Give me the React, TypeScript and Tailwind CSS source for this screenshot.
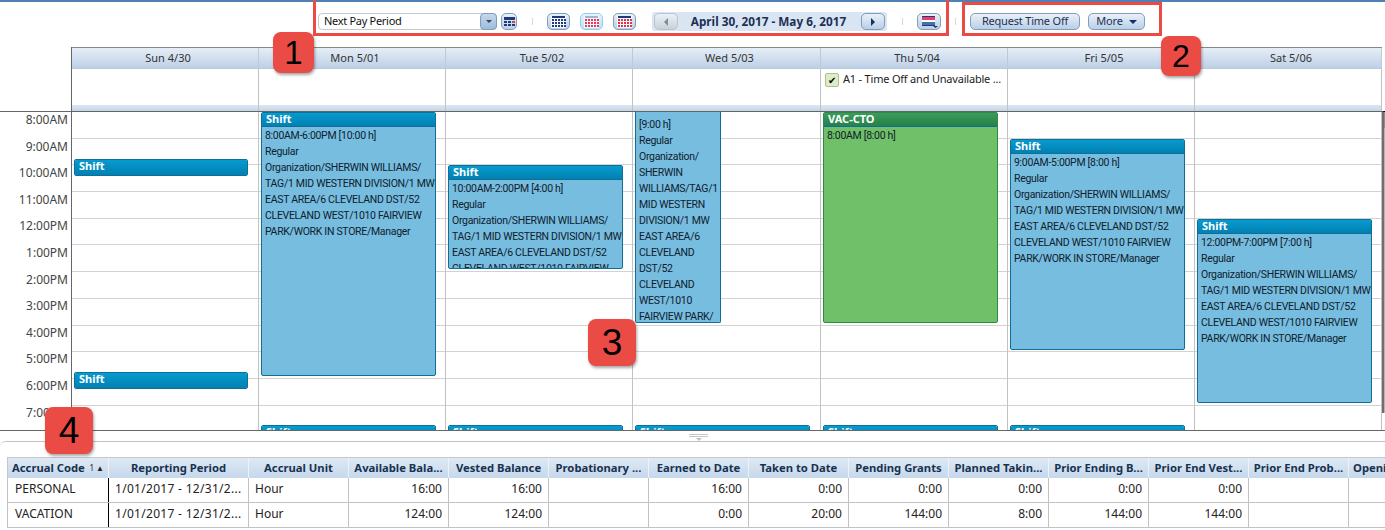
import React from "react";

const font = "font-['Noto_Sans',sans-serif]";

const days = ["Sun 4/30", "Mon 5/01", "Tue 5/02", "Wed 5/03", "Thu 5/04", "Fri 5/05", "Sat 5/06"];
const hours = ["8:00AM", "9:00AM", "10:00AM", "11:00AM", "12:00PM", "1:00PM", "2:00PM", "3:00PM", "4:00PM", "5:00PM", "6:00PM", "7:00PM"];

const orgLines = [
  "Regular",
  "Organization/SHERWIN WILLIAMS/",
  "TAG/1 MID WESTERN DIVISION/1 MW",
  "EAST AREA/6 CLEVELAND DST/52",
  "CLEVELAND WEST/1010 FAIRVIEW",
  "PARK/WORK IN STORE/Manager",
];

const columns = [
  { title: "Accrual Code", w: "w-[101px]" },
  { title: "Reporting Period", w: "w-[140px]" },
  { title: "Accrual Unit", w: "w-[100px]" },
  { title: "Available Bala...", w: "w-[100px]" },
  { title: "Vested Balance", w: "w-[100px]" },
  { title: "Probationary ...", w: "w-[100px]" },
  { title: "Earned to Date", w: "w-[100px]" },
  { title: "Taken to Date", w: "w-[100px]" },
  { title: "Pending Grants", w: "w-[100px]" },
  { title: "Planned Takin...", w: "w-[100px]" },
  { title: "Prior Ending B...", w: "w-[100px]" },
  { title: "Prior End Vest...", w: "w-[100px]" },
  { title: "Prior End Prob...", w: "w-[100px]" },
  { title: "Openi", w: "w-[100px]" },
];

const rows = [
  ["PERSONAL", "1/01/2017 - 12/31/2...", "Hour", "16:00", "16:00", "", "16:00", "0:00", "0:00", "0:00", "0:00", "0:00", "", ""],
  ["VACATION", "1/01/2017 - 12/31/2...", "Hour", "124:00", "124:00", "", "0:00", "20:00", "144:00", "8:00", "144:00", "144:00", "", ""],
];

function Shift({ className, lines, title = "Shift", green = false }: { className: string; lines?: string[]; title?: string; green?: boolean }) {
  return (
    <div
      className={`absolute overflow-hidden rounded-[2px] border ${
        green ? "border-[#2f8a4a] bg-[#70bf69]" : "border-[#0f6f96] bg-[#76bde0]"
      } ${className}`}
    >
      <div
        className={`${lines ? "h-[13px]" : "h-full"} px-1 text-[11px] leading-[12px] font-bold text-white ${
          green ? "bg-gradient-to-b from-[#3c9c5c] to-[#26804a]" : "bg-gradient-to-b from-[#069bcf] to-[#0280b2]"
        }`}
      >
        {title}
      </div>
      {lines && (
        <div className="border-t border-[#0f6f96] px-[3px] pt-px font-['Roboto',sans-serif] text-[10.5px] leading-[16px] tracking-[-0.3px] whitespace-nowrap text-[#10202c]">
          {lines.map((l) => (
            <div key={l}>{l}</div>
          ))}
        </div>
      )}
    </div>
  );
}

function GridIcon({ dots = "#1f3a78", head = "#1f3a78" }: { dots?: string; head?: string }) {
  return (
    <svg width="15" height="12" viewBox="0 0 15 12">
      <rect width="15" height="12" fill="#f6f8fb" />
      <rect x="1" y="0" width="13" height="2" fill={head} />
      {[3, 6, 9].map((y) =>
        [1, 4, 7, 10, 13].map((x) => <rect key={`${x}-${y}`} x={x} y={y} width="2" height="2" fill={dots} />)
      )}
    </svg>
  );
}

function ToolButton({ children, className = "", light = false }: { children: React.ReactNode; className?: string; light?: boolean }) {
  return (
    <div
      className={`flex h-[17px] items-center justify-center rounded-[5px] border ${
        light ? "border-[#8fd0ee] bg-gradient-to-b from-[#e6f6fe] to-[#b5e2f8]" : "border-[#7f9dbd] bg-gradient-to-b from-[#eaf1f9] to-[#b9cfe6]"
      } ${className}`}
    >
      {children}
    </div>
  );
}

function Sep() {
  return <div className="h-[7px] w-px bg-[#d5d9dd]" />;
}

function Badge({ n, className }: { n: string; className: string }) {
  return (
    <div
      className={`absolute flex items-center justify-center rounded-[8px] bg-[#ea4b45] font-['Liberation_Sans',sans-serif] text-black shadow-[1px_2px_3px_rgba(0,0,0,0.35)] ${className}`}
    >
      {n}
    </div>
  );
}

export default function App() {
  return (
    <div className={`relative h-[530px] w-[1385px] overflow-hidden bg-white ${font}`}>
      <div className="h-[2px] bg-[#4f81b5]" />

      {/* toolbar */}
      <div className="flex h-[45px] items-start pt-[11px] pl-[318px]">
        <div className="flex h-[17px] w-[179px] items-center rounded-[4px] border border-[#c5c9cd] bg-white pl-[5px] text-[11px] tracking-[-0.3px] text-[#111]">
          <span className="flex-1">Next Pay Period</span>
          <div className="-mr-px flex h-[17px] w-[17px] items-center justify-center rounded-[4px] border border-[#7f9dbd] bg-gradient-to-b from-[#c6d8ec] to-[#9dbcdc]">
            <div className="h-0 w-0 border-x-[3px] border-t-[3px] border-x-transparent border-t-[#33475f]" />
          </div>
        </div>
        <ToolButton className="ml-[4px] w-[16px]">
          <svg width="11" height="9" viewBox="0 0 11 9">
            <rect width="11" height="3" fill="#1f3a78" />
            <rect y="4" width="3" height="2" fill="#1f3a78" />
            <rect x="4" y="4" width="3" height="2" fill="#1f3a78" />
            <rect x="8" y="4" width="3" height="2" fill="#d8404a" />
            <rect y="7" width="3" height="2" fill="#1f3a78" />
            <rect x="4" y="7" width="3" height="2" fill="#1f3a78" />
            <rect x="8" y="7" width="3" height="2" fill="#1f3a78" />
          </svg>
        </ToolButton>
        <div className="ml-[15px] flex h-[17px] items-center"><Sep /></div>
        <ToolButton className="ml-[14px] w-[23px]"><GridIcon /></ToolButton>
        <ToolButton light className="ml-[10px] w-[23px]"><GridIcon dots="#e8395f" head="#aab4c8" /></ToolButton>
        <ToolButton className="ml-[10px] w-[23px]"><GridIcon dots="#e0344e" /></ToolButton>

        <div className="-mt-px ml-[16px] flex h-[19px] w-[235px] items-center rounded-[3px] bg-[#d9e5f2] pl-[2px]">
          <ToolButton className="h-[15px] w-[24px] border-[#b8c4d0] from-[#e4e8ec] to-[#c8d0d8]">
            <div className="h-0 w-0 border-y-[4px] border-r-[4px] border-y-transparent border-r-[#7f8c99]" />
          </ToolButton>
          <span className="w-[183px] pr-[2px] text-center text-[11.75px] font-bold text-[#1e2f55]">April 30, 2017 - May 6, 2017</span>
          <ToolButton className="h-[15px] w-[24px]">
            <div className="h-0 w-0 border-y-[4px] border-l-[4px] border-y-transparent border-l-[#14325f]" />
          </ToolButton>
        </div>

        <div className="ml-[15px] flex h-[17px] items-center"><Sep /></div>
        <ToolButton className="ml-[14px] w-[24px]">
          <svg width="17" height="12" viewBox="0 0 17 12">
            <rect x="1" y="0" width="13" height="1" fill="#1f3a78" />
            <rect x="1" y="1" width="13" height="3" fill="#e6406a" />
            <rect x="1" y="4" width="13" height="2" fill="#ffffff" />
            <rect x="1" y="6" width="13" height="3" fill="#4a6ea8" />
            <rect x="1" y="9" width="13" height="1" fill="#1f3a78" />
            <path d="M12 10h5l-2.5 2z" fill="#1f3a78" />
          </svg>
        </ToolButton>
        <div className="ml-[14px] flex h-[17px] items-center"><Sep /></div>

        <ToolButton className="ml-[14px] w-[110px] text-[11px] tracking-[-0.2px] text-[#1e2f55]">Request Time Off</ToolButton>
        <ToolButton className="ml-[8px] w-[57px] gap-[6px] text-[11px] tracking-[-0.2px] text-[#1e2f55]">
          More
          <div className="h-0 w-0 border-x-[4px] border-t-[4px] border-x-transparent border-t-[#0f2f6f]" />
        </ToolButton>
      </div>

      {/* calendar */}
      <div className="flex h-[384px] border-b border-[#666]">
        <div className="w-[71px] shrink-0">
          <div className="h-[65px] border-b border-[#666]" />
          {hours.map((h) => (
            <div key={h} className="h-[26.6px] pr-[3px] text-right text-[12px] leading-[15px] text-[#444]">
              {h}
            </div>
          ))}
        </div>
        <div className="relative w-[1311px] shrink-0 overflow-hidden border-l border-[#666]">
          <div className="flex h-[22px] border-y border-t-[#888] border-b-[#b6c9de] bg-gradient-to-b from-[#e6eef7] to-[#bdd0e6]">
            {days.map((d, i) => (
              <div
                key={d}
                className={`flex ${i === 3 ? "w-[188px]" : "w-[187px]"} items-center justify-center border-r border-[#bccbdc] pl-[6px] text-[11px] text-[#333]`}
              >
                {d}
              </div>
            ))}
          </div>
          <div className="flex h-[43px] border-b border-[#666]">
            {days.map((d, i) => (
              <div key={d} className={`flex ${i === 3 ? "w-[188px]" : "w-[187px]"} flex-col border-r border-[#c2c2c2]`}>
                <div className="flex flex-1 items-start gap-[4px] pt-[4px] pl-[4px] text-[11px] leading-[12px] tracking-[-0.2px] whitespace-nowrap text-[#222]">
                  {i === 4 && (
                    <>
                      <div className="flex h-[14px] w-[14px] items-center justify-center rounded-[2px] border border-[#a9c48a] bg-[#dcebc8] text-[10px] text-black">
                        ✔
                      </div>
                      A1 - Time Off and Unavailable ...
                    </>
                  )}
                </div>
                <div className="h-[6px] bg-gradient-to-b from-[#dde7f2] to-[#c4d5e8]" />
              </div>
            ))}
          </div>
          {/* hour lines and day columns */}
          <div className="relative h-[318px] overflow-hidden">
            <div className="flex h-full flex-col">
              {hours.map((h) => (
                <div key={h} className="h-[26.7px] shrink-0 border-b border-[#d2d2d2]" />
              ))}
            </div>
            <div className="absolute inset-0 flex">
              {days.map((d, i) => (
                <div key={d} className={`${i === 3 ? "w-[188px]" : "w-[187px]"} border-r border-[#c2c2c2]`} />
              ))}
            </div>
            <Shift className="top-[47px] left-[2px] w-[174px] h-[17px]" />
            <Shift className="top-[260px] left-[2px] w-[174px] h-[17px]" />
            <Shift className="top-[0px] left-[189px] w-[175px] h-[264px]" lines={["8:00AM-6:00PM [10:00 h]", ...orgLines]} />
            <Shift
              className="top-[53px] left-[376px] w-[175px] h-[104px]"
              lines={["10:00AM-2:00PM [4:00 h]", ...orgLines.slice(0, 4), "CLEVELAND WEST/1010 FAIRVIEW"]}
            />
            <div className="absolute top-0 left-[563px] h-[211px] w-[86px] overflow-hidden rounded-b-[2px] border border-t-0 border-[#0f6f96] bg-[#76bde0] px-[3px] pt-[5px] font-['Roboto',sans-serif] text-[10.5px] leading-[16px] tracking-[-0.3px] whitespace-nowrap text-[#10202c]">
              {["[9:00 h]", "Regular", "Organization/", "SHERWIN", "WILLIAMS/TAG/1", "MID WESTERN", "DIVISION/1 MW", "EAST AREA/6", "CLEVELAND", "DST/52", "CLEVELAND", "WEST/1010", "FAIRVIEW PARK/"].map((l, i) => (
                <div key={i}>{l}</div>
              ))}
            </div>
            <Shift green title="VAC-CTO" className="top-[0px] left-[751px] w-[175px] h-[211px]" lines={["8:00AM [8:00 h]"]} />
            <Shift className="top-[27px] left-[938px] w-[175px] h-[211px]" lines={["9:00AM-5:00PM [8:00 h]", ...orgLines]} />
            <Shift className="top-[107px] left-[1125px] w-[175px] h-[184px]" lines={["12:00PM-7:00PM [7:00 h]", ...orgLines]} />
            <Shift className="top-[313px] left-[189px] w-[175px] h-[20px]" />
            <Shift className="top-[313px] left-[376px] w-[175px] h-[20px]" />
            <Shift className="top-[313px] left-[563px] w-[175px] h-[20px]" />
            <Shift className="top-[313px] left-[751px] w-[175px] h-[20px]" />
            <Shift className="top-[313px] left-[938px] w-[175px] h-[20px]" />
          </div>
        </div>
        {/* scrollbar sliver */}
        <div className="flex w-[3px] shrink-0 flex-col">
          <div className="h-[64px] shrink-0" />
          <div className="h-[17px] shrink-0 border-t border-l-[2px] border-t-black border-l-[#6f6f6f] bg-[#8f8f8f]" />
          <div className="h-[285px] shrink-0 border-l-[2px] border-[#6f6f6f] bg-[#b4b4b4]" />
        </div>
      </div>

      {/* splitter */}
      <div className="flex h-[10px] items-center justify-center">
        <div className="ml-[12px] flex flex-col items-center gap-px pt-[2px]">
          <div className="h-px w-[19px] bg-[#c8c8c8]" />
          <div className="h-px w-[19px] bg-[#c8c8c8]" />
          <div className="h-0 w-0 border-x-[3px] border-t-[3px] border-x-transparent border-t-[#c0c0c0]" />
        </div>
      </div>

      {/* accruals table */}
      <div className="rounded-tl-[6px] border-t border-[#c2c2c2] pt-[15px] pl-[7px]">
        <div className="flex h-[21px] w-max border border-b-0 border-[#c2c8ce] bg-gradient-to-b from-[#dfe9f4] to-[#c5d8ec]">
          {columns.map((c, i) => (
            <div
              key={c.title}
              className={`flex shrink-0 items-center ${i === 0 ? "justify-between px-[4px]" : i === 13 ? "justify-start pl-[4px]" : "justify-center"} border-r border-[#eef3f8] text-[11.25px] font-bold whitespace-nowrap text-[#17324f] ${c.w}`}
            >
              {c.title}
              {i === 0 && <span className="text-[8px] font-normal text-[#222]">1 ▲</span>}
            </div>
          ))}
        </div>
        {rows.map((r) => (
          <div key={r[0]} className="flex h-[25px] w-max border-b border-l border-[#c2c2c2]">
            {r.map((v, i) => (
              <div
                key={i}
                className={`flex shrink-0 items-center pb-[3px] whitespace-nowrap ${i === 0 ? "justify-start pl-[7px]" : i < 3 ? "justify-start pl-[6px]" : "justify-end pr-[6px]"} border-r ${i === 0 ? "border-r-black" : "border-r-[#c2c2c2]"} ${i === 1 ? "tracking-[0.3px]" : ""} text-[12px] text-[#222] ${columns[i].w}`}
              >
                {v}
              </div>
            ))}
          </div>
        ))}
      </div>

      {/* annotation boxes */}
      <div className="absolute -top-[3px] left-[313px] h-[39px] w-[636px] border-[3px] border-[#ea4b45]" />
      <div className="absolute top-[2px] left-[962px] h-[34px] w-[200px] border-[3px] border-[#ea4b45]" />
      <Badge n="1" className="top-[32px] left-[273px] h-[41px] w-[41px] text-[33px]" />
      <Badge n="2" className="top-[36px] left-[1161px] h-[40px] w-[40px] text-[32px]" />
      <Badge n="3" className="top-[319px] left-[588px] h-[47px] w-[48px] text-[37px]" />
      <Badge n="4" className="top-[407px] left-[45px] h-[47px] w-[48px] text-[37px]" />
    </div>
  );
}
